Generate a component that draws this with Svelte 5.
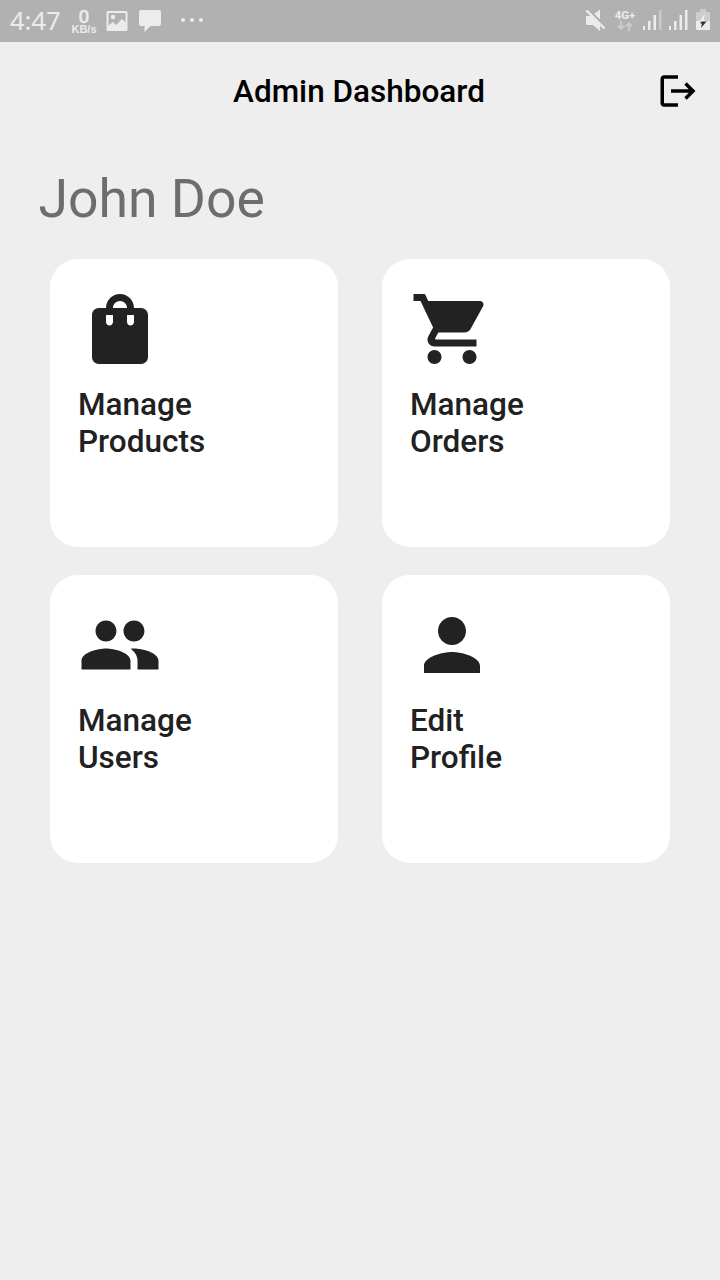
<script>
  const cards = [
    {
      lines: ['Manage', 'Products'],
      icon: 'M18 6h-2c0-2.21-1.79-4-4-4S8 3.79 8 6H6c-1.1 0-2 .9-2 2v12c0 1.1.9 2 2 2h12c1.1 0 2-.9 2-2V8c0-1.1-.9-2-2-2zm-8 4c0 .55-.45 1-1 1s-1-.45-1-1V8h2v2zm2-6c1.1 0 2 .9 2 2h-4c0-1.1.9-2 2-2zm4 6c0 .55-.45 1-1 1s-1-.45-1-1V8h2v2z'
    },
    {
      lines: ['Manage', 'Orders'],
      icon: 'M7 18c-1.1 0-1.99.9-1.99 2S5.9 22 7 22s2-.9 2-2-.9-2-2-2zM1 2v2h2l3.6 7.59-1.35 2.45c-.16.28-.25.61-.25.96 0 1.1.9 2 2 2h12v-2H7.42c-.14 0-.25-.11-.25-.25l.03-.12.9-1.63h7.45c.75 0 1.41-.41 1.75-1.03l3.58-6.49c.08-.14.12-.31.12-.48 0-.55-.45-1-1-1H5.21l-.94-2H1zm16 16c-1.1 0-1.99.9-1.99 2s.89 2 1.99 2 2-.9 2-2-.9-2-2-2z'
    },
    {
      lines: ['Manage', 'Users'],
      icon: 'M16 11c1.66 0 2.99-1.34 2.99-3S17.66 5 16 5c-1.66 0-3 1.34-3 3s1.34 3 3 3zm-8 0c1.66 0 2.99-1.34 2.99-3S9.66 5 8 5C6.34 5 5 6.34 5 8s1.34 3 3 3zm0 2c-2.33 0-7 1.17-7 3.5V19h14v-2.5c0-2.33-4.67-3.5-7-3.5zm8 0c-.29 0-.62.02-.97.05 1.16.84 1.97 1.97 1.97 3.45V19h6v-2.5c0-2.33-4.67-3.5-7-3.5z'
    },
    {
      lines: ['Edit', 'Profile'],
      icon: 'M12 12c2.21 0 4-1.79 4-4s-1.79-4-4-4-4 1.79-4 4 1.79 4 4 4zm0 2c-2.67 0-8 1.34-8 4v2h16v-2c0-2.66-5.33-4-8-4z'
    }
  ];
</script>

<div class="screen">
  <div class="status">
    <span class="time">4:47</span>
    <span class="net"><b>0</b><small>KB/s</small></span>
    <svg class="photo" width="22" height="22" viewBox="0 0 22 22">
      <path fill="#ececec" fill-rule="evenodd" d="M2 1h18q1.500 0 1.500 1.500v17q0 1.500-1.500 1.500H2Q.5 21 .5 19.500v-17Q.5 1 2 1zm.5 2v16h17V3z" />
      <circle cx="7" cy="7" r="2.200" fill="#ececec" />
      <path fill="#ececec" d="M2 16l5-4 3 3 6-6 4 4v7H2z" />
    </svg>
    <svg class="chat" width="24" height="24" viewBox="0 0 24 24">
      <path fill="#ececec" d="M3 1h18q2 0 2 2v12q0 2-2 2H12.500L6.500 23V17H3q-2 0-2-2V3q0-2 2-2z" />
    </svg>
    <svg class="dots" width="24" height="6" viewBox="0 0 24 6" fill="#ececec">
      <circle cx="3" cy="3" r="2" /><circle cx="12" cy="3" r="2" /><circle cx="21" cy="3" r="2" />
    </svg>
    <span class="gap"></span>
    <svg class="mute" width="22" height="24" viewBox="0 0 22 24">
      <path fill="#ececec" d="M2 7h4.500L15 .5v21.500l-7-6H2q-1 0-1-1V8q0-1 1-1z" />
      <path stroke="#b1b1b1" stroke-width="3.600" d="M2 0l18 18" />
      <path stroke="#ececec" stroke-width="2.400" d="M1.500 1.500l18 18" />
    </svg>
    <span class="lte">
      <span>4G+</span>
      <svg width="16" height="10" viewBox="0 0 16 10" fill="none" stroke="#cacaca" stroke-width="2">
        <path d="M4 0v8M1 4.500l3 3.500 3-3.500M12 10V2M9 5.500L12 2l3 3.500" />
      </svg>
    </span>
    <svg class="signal" width="19" height="22" viewBox="0 0 19 22" fill="#ececec">
      <path d="M0 17h2v4H0zM5 12h2.500v9H5zM10.500 6h2.500v15h-2.500z" /><path fill="#cacaca" d="M16 1h2.500v20H16z" />
    </svg>
    <svg class="signal two" width="19" height="22" viewBox="0 0 19 22" fill="#ececec">
      <path d="M0 17h2v4H0zM5 12h2.500v9H5zM10.500 6h2.500v15h-2.500zM16 1h2.500v20H16z" />
    </svg>
    <svg class="battery" width="14" height="22" viewBox="0 0 14 22">
      <path fill="#cdcdcd" d="M4 0h6v3h4v10H0V3h4z" />
      <path fill="#ececec" d="M0 12h14v8q0 1-1 1H1q-1 0-1-1z" />
      <path fill="#f0f0f0" d="M8.500 5L3.500 12.500h6.500l-2-2z" />
      <path fill="#303030" d="M5.500 12.500H10.500L5 19l1-4.500H4z" />
    </svg>
  </div>

  <header>
    <h1>Admin Dashboard</h1>
    <svg width="42" height="42" viewBox="0 0 24 24">
      <path d="M17 7l-1.410 1.410L18.170 11H8v2h10.170l-2.580 2.580L17 17l5-5zM4 5h8V3H4c-1.100 0-2 .9-2 2v14c0 1.100.9 2 2 2h8v-2H4V5z" />
    </svg>
  </header>

  <h2>John Doe</h2>

  <main>
    {#each cards as card}
      <section class="card">
        <svg width="84" height="84" viewBox="0 0 24 24"><path d={card.icon} /></svg>
        <p>{card.lines[0]}<br />{card.lines[1]}</p>
      </section>
    {/each}
  </main>
</div>

<style>
  :global(body) {
    background: #eeeeee;
  }
  .screen {
    width: 720px;
    height: 1280px;
    box-sizing: border-box;
    overflow: hidden;
    background: #eeeeee;
    font-family: Roboto, sans-serif;
  }
  svg {
    display: block;
    flex: none;
  }
  .status {
    display: flex;
    align-items: center;
    height: 42px;
    padding: 0 10px;
    box-sizing: border-box;
    background: #b1b1b1;
    color: #ececec;
  }
  .time {
    width: 51px;
    margin-top: -2px;
    font: 25.500px/42px "Noto Sans", sans-serif;
    white-space: nowrap;
  }
  .net {
    display: flex;
    flex-direction: column;
    align-items: center;
    width: 26px;
    margin-left: 10px;
    padding-top: 2px;
  }
  .net b {
    font: 500 19px/15px Roboto, sans-serif;
    -webkit-text-stroke: 0.3px #ececec;
  }
  .net small {
    font: 700 11px/11px "Liberation Sans", sans-serif;
  }
  .photo {
    margin-left: 9px;
    margin-top: -1px;
  }
  .chat {
    margin-left: 10px;
  }
  .dots {
    margin-left: 18px;
    margin-top: -2px;
  }
  .gap {
    flex: 1;
  }
  .mute {
    margin-right: 7px;
  }
  .lte {
    display: flex;
    flex-direction: column;
    align-items: center;
    width: 22px;
    margin-top: -2px;
    margin-right: 7px;
    font: 700 11.500px/12px Roboto, sans-serif;
  }
  .signal {
    margin-right: 7px;
    margin-top: -2px;
  }
  .two {
    margin-right: 8px;
  }
  .battery {
    margin-top: -2px;
  }
  header {
    display: grid;
    grid-template-columns: 42px 1fr 42px;
    align-items: center;
    height: 98px;
    padding: 0 21px;
  }
  h1 {
    grid-column: 2;
    margin: 0 2px 0 0;
    text-align: center;
    color: #000;
    font: 500 31.500px/37px Roboto, sans-serif;
  }
  h2 {
    margin: 27px 0 0 38.500px;
    color: #6d6d6d;
    font: 400 53.500px/64px Roboto, sans-serif;
  }
  main {
    display: grid;
    grid-template-columns: 288px 288px;
    gap: 28px 44px;
    padding: 28px 50px 0;
  }
  .card {
    height: 288px;
    padding: 28px;
    box-sizing: border-box;
    border-radius: 28px;
    background: #fff;
  }
  .card svg {
    fill: #222;
  }
  p {
    margin: 15px 0 0;
    color: #212121;
    font: 500 31.500px/37px Roboto, sans-serif;
  }
</style>
